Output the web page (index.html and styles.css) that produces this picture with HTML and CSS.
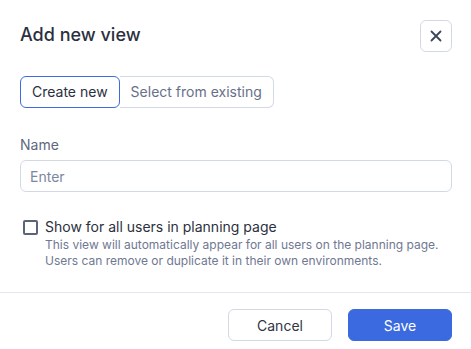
FILE: index.html
```html
<!DOCTYPE html>
<html>
<head>
<meta charset="utf-8">
<link rel="stylesheet" href="styles.css">
</head>
<body>
<div class="dialog">
  <div class="content">
    <div class="header">
      <h1 class="title">Add new view</h1>
      <button class="close" aria-label="Close">
        <svg width="12" height="12" viewBox="0 0 12 12"><path d="M1.5 1.5L10.5 10.5M10.5 1.5L1.5 10.5" stroke="#3d4657" stroke-width="1.8" stroke-linecap="round"/></svg>
      </button>
    </div>
    <div class="tabs">
      <button class="tab active">Create new</button>
      <button class="tab">Select from existing</button>
    </div>
    <label class="label">Name</label>
    <input class="input" type="text" placeholder="Enter">
    <div class="check-row">
      <span class="checkbox"></span>
      <div class="check-text">
        <div class="check-label">Show for all users in planning page</div>
        <div class="help">This view will automatically appear for all users on the planning page.<br>Users can remove or duplicate it in their own environments.</div>
      </div>
    </div>
  </div>
  <div class="footer">
    <button class="btn cancel">Cancel</button>
    <button class="btn save">Save</button>
  </div>
</div>
</body>
</html>
```
FILE: styles.css
```css
* { box-sizing: border-box; }
html, body { margin: 0; padding: 0; background: #fff; }
body { font-family: Inter, "Noto Sans", sans-serif; color: #2f3545; }
.dialog { width: 471px; height: 349px; overflow: hidden; }
.content { padding: 20px 19px 23px 20px; border-bottom: 1px solid #e3e6ec; }
.header { display: flex; justify-content: space-between; align-items: center; height: 32px; }
.title { margin: 0; font-size: 18px; font-weight: 500; color: #2b3040; line-height: 24px; margin-top: -3px; }
.close { width: 32px; height: 32px; border: 1px solid #d4d9e6; border-radius: 6px; background: #fff; display: flex; align-items: center; justify-content: center; padding: 0; }
.tabs { display: flex; margin-top: 24px; }
.tab { height: 32px; font-family: inherit; font-size: 14px; background: #fff; border: 1px solid #d4d9e6; color: #687089; padding: 0 11px; line-height: 30px; }
.tab:first-child { border-radius: 6px 0 0 6px; }
.tab:last-child { border-radius: 0 6px 6px 0; border-left: none; }
.tab.active { border-color: #3c6ce0; color: #2b3040; border-radius: 6px; }
.label { display: block; margin-top: 27px; font-size: 14px; line-height: 20px; color: #5e6780; }
.input { display: block; width: 100%; height: 32px; margin-top: 5px; border: 1px solid #d4d9e6; border-radius: 6px; padding: 0 9px; font-family: inherit; font-size: 14px; color: #2b3040; outline: none; }
.input::placeholder { color: #7d86a1; }
.check-row { display: flex; gap: 7px; margin-top: 25px; padding-left: 3px; }
.checkbox { width: 15px; height: 15px; border: 2px solid #5b6478; border-radius: 2px; flex: none; margin-top: 3px; }
.check-label { font-size: 14px; line-height: 20px; color: #2b3040; }
.help { font-size: 12px; line-height: 16px; color: #6f7892; }
.footer { display: flex; justify-content: flex-end; gap: 16px; padding: 16px 19px 0 20px; }
.btn { width: 104px; height: 32px; border-radius: 6px; font-family: inherit; font-size: 14px; }
.cancel { background: #fff; border: 1px solid #d4d9e6; color: #2f3545; }
.save { background: #3b6ae0; border: 1px solid #3b6ae0; color: #fff; }
```
